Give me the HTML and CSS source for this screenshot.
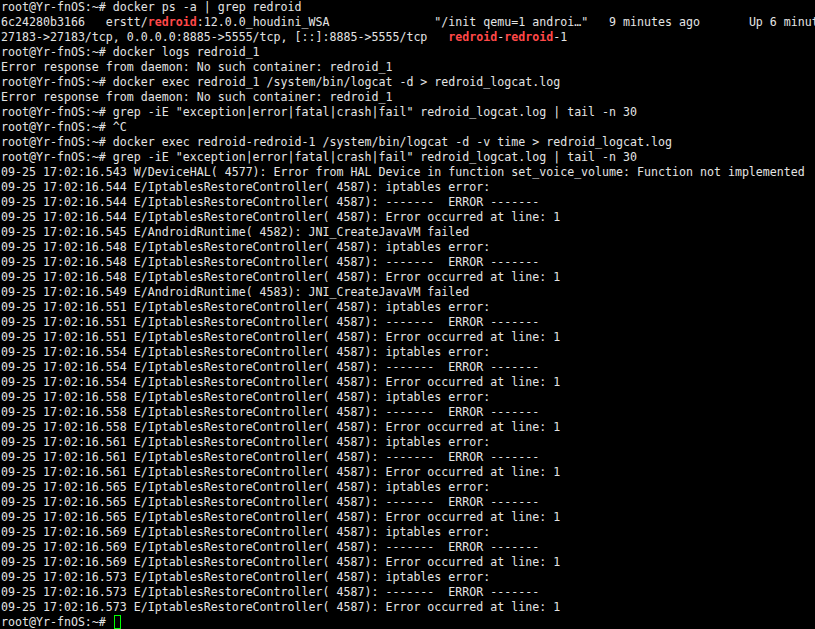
FILE: index.html
```html
<!DOCTYPE html>
<html>
<head>
<meta charset="utf-8">
<link rel="stylesheet" href="styles.css">
</head>
<body>
<div class="term">
<div class="ln">root@Yr-fnOS:~# docker ps -a | grep redroid</div>
<div class="ln">6c24280b3166   erstt/<b class="hl">redroid</b>:12.0.0_houdini_WSA               "/init qemu=1 androi…"   9 minutes ago       Up 6 minutes</div>
<div class="ln">27183->27183/tcp, 0.0.0.0:8885->5555/tcp, [::]:8885->5555/tcp   <b class="hl">redroid</b>-<b class="hl">redroid</b>-1</div>
<div class="ln">root@Yr-fnOS:~# docker logs redroid_1</div>
<div class="ln">Error response from daemon: No such container: redroid_1</div>
<div class="ln">root@Yr-fnOS:~# docker exec redroid_1 /system/bin/logcat -d > redroid_logcat.log</div>
<div class="ln">Error response from daemon: No such container: redroid_1</div>
<div class="ln">root@Yr-fnOS:~# grep -iE "exception|error|fatal|crash|fail" redroid_logcat.log | tail -n 30</div>
<div class="ln">root@Yr-fnOS:~# ^C</div>
<div class="ln">root@Yr-fnOS:~# docker exec redroid-redroid-1 /system/bin/logcat -d -v time > redroid_logcat.log</div>
<div class="ln">root@Yr-fnOS:~# grep -iE "exception|error|fatal|crash|fail" redroid_logcat.log | tail -n 30</div>
<div class="ln">09-25 17:02:16.543 W/DeviceHAL( 4577): Error from HAL Device in function set_voice_volume: Function not implemented</div>
<div class="ln">09-25 17:02:16.544 E/IptablesRestoreController( 4587): iptables error:</div>
<div class="ln">09-25 17:02:16.544 E/IptablesRestoreController( 4587): -------  ERROR -------</div>
<div class="ln">09-25 17:02:16.544 E/IptablesRestoreController( 4587): Error occurred at line: 1</div>
<div class="ln">09-25 17:02:16.545 E/AndroidRuntime( 4582): JNI_CreateJavaVM failed</div>
<div class="ln">09-25 17:02:16.548 E/IptablesRestoreController( 4587): iptables error:</div>
<div class="ln">09-25 17:02:16.548 E/IptablesRestoreController( 4587): -------  ERROR -------</div>
<div class="ln">09-25 17:02:16.548 E/IptablesRestoreController( 4587): Error occurred at line: 1</div>
<div class="ln">09-25 17:02:16.549 E/AndroidRuntime( 4583): JNI_CreateJavaVM failed</div>
<div class="ln">09-25 17:02:16.551 E/IptablesRestoreController( 4587): iptables error:</div>
<div class="ln">09-25 17:02:16.551 E/IptablesRestoreController( 4587): -------  ERROR -------</div>
<div class="ln">09-25 17:02:16.551 E/IptablesRestoreController( 4587): Error occurred at line: 1</div>
<div class="ln">09-25 17:02:16.554 E/IptablesRestoreController( 4587): iptables error:</div>
<div class="ln">09-25 17:02:16.554 E/IptablesRestoreController( 4587): -------  ERROR -------</div>
<div class="ln">09-25 17:02:16.554 E/IptablesRestoreController( 4587): Error occurred at line: 1</div>
<div class="ln">09-25 17:02:16.558 E/IptablesRestoreController( 4587): iptables error:</div>
<div class="ln">09-25 17:02:16.558 E/IptablesRestoreController( 4587): -------  ERROR -------</div>
<div class="ln">09-25 17:02:16.558 E/IptablesRestoreController( 4587): Error occurred at line: 1</div>
<div class="ln">09-25 17:02:16.561 E/IptablesRestoreController( 4587): iptables error:</div>
<div class="ln">09-25 17:02:16.561 E/IptablesRestoreController( 4587): -------  ERROR -------</div>
<div class="ln">09-25 17:02:16.561 E/IptablesRestoreController( 4587): Error occurred at line: 1</div>
<div class="ln">09-25 17:02:16.565 E/IptablesRestoreController( 4587): iptables error:</div>
<div class="ln">09-25 17:02:16.565 E/IptablesRestoreController( 4587): -------  ERROR -------</div>
<div class="ln">09-25 17:02:16.565 E/IptablesRestoreController( 4587): Error occurred at line: 1</div>
<div class="ln">09-25 17:02:16.569 E/IptablesRestoreController( 4587): iptables error:</div>
<div class="ln">09-25 17:02:16.569 E/IptablesRestoreController( 4587): -------  ERROR -------</div>
<div class="ln">09-25 17:02:16.569 E/IptablesRestoreController( 4587): Error occurred at line: 1</div>
<div class="ln">09-25 17:02:16.573 E/IptablesRestoreController( 4587): iptables error:</div>
<div class="ln">09-25 17:02:16.573 E/IptablesRestoreController( 4587): -------  ERROR -------</div>
<div class="ln">09-25 17:02:16.573 E/IptablesRestoreController( 4587): Error occurred at line: 1</div>
<div class="ln">root@Yr-fnOS:~# <span class="cursor"></span></div>
</div>
</body>
</html>
```
FILE: styles.css
```css
html, body {
  margin: 0;
  padding: 0;
  background: #000;
  height: 100%;
  overflow: hidden;
}
.term {
  font-family: "DejaVu Sans Mono", monospace;
  font-size: 11.627px;
  line-height: 15px;
  color: #e4e4e4;
  padding: 0 0 0 1px;
}
.ln {
  white-space: pre;
  overflow: hidden;
  height: 15px;
}
.hl {
  color: #ff4848;
  font-weight: bold;
}
.cursor {
  display: inline-block;
  box-sizing: border-box;
  width: 7px;
  height: 14px;
  border: 1px solid #00ff00;
  vertical-align: top;
  margin-left: 1px;
}
```
